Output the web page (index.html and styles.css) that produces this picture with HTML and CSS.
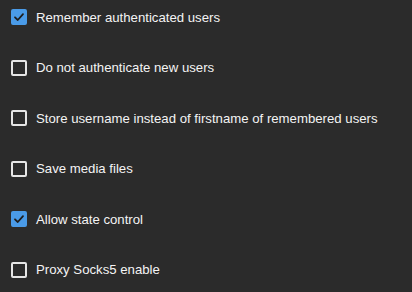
FILE: index.html
```html
<!DOCTYPE html>
<html>
<head>
<meta charset="utf-8">
<link rel="stylesheet" href="styles.css">
</head>
<body>
<div class="list">
  <label class="row"><span class="box checked"><svg viewBox="0 0 16 16" width="16" height="16"><path d="M4 8.3 L6.8 11 L12 5.2" fill="none" stroke="#1e1e1e" stroke-width="1.8" stroke-linecap="round" stroke-linejoin="round"/></svg></span><span class="text">Remember authenticated users</span></label>
  <label class="row"><span class="box"></span><span class="text">Do not authenticate new users</span></label>
  <label class="row"><span class="box"></span><span class="text">Store username instead of firstname of remembered users</span></label>
  <label class="row"><span class="box"></span><span class="text">Save media files</span></label>
  <label class="row"><span class="box checked"><svg viewBox="0 0 16 16" width="16" height="16"><path d="M4 8.3 L6.8 11 L12 5.2" fill="none" stroke="#1e1e1e" stroke-width="1.8" stroke-linecap="round" stroke-linejoin="round"/></svg></span><span class="text">Allow state control</span></label>
  <label class="row"><span class="box"></span><span class="text">Proxy Socks5 enable</span></label>
</div>
</body>
</html>
```
FILE: styles.css
```css
html, body {
  margin: 0;
  padding: 0;
  background: #2b2b2b;
  width: 412px;
  height: 292px;
  overflow: hidden;
}
.list {
  display: flex;
  flex-direction: column;
  gap: 34.6px;
  padding: 9px 0 0 11px;
}
.row {
  display: flex;
  align-items: center;
  height: 16px;
  gap: 9px;
  font-family: "Liberation Sans", Arial, sans-serif;
  font-size: 13.2px;
  color: #f4f4f4;
}
.box {
  box-sizing: border-box;
  width: 16px;
  height: 16px;
  border: 2px solid #e6e6e6;
  border-radius: 2px;
  flex: none;
  position: relative;
}
.box.checked {
  background: #4a9be8;
  border-color: #4a9be8;
}
.box svg {
  position: absolute;
  left: -2px;
  top: -2px;
}
.text {
  white-space: nowrap;
}
```
